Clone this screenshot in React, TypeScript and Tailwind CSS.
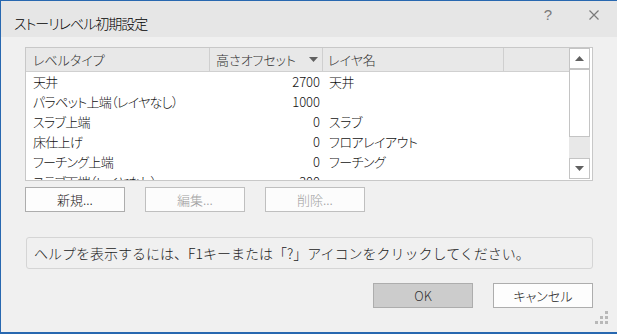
import { useState } from "react";

type Row = {
    type: string;
    offset: string;
    layer: string;
};

const rows: Row[] = [
    { type: "天井", offset: "2700", layer: "天井" },
    { type: "パラペット上端（レイヤなし）", offset: "1000", layer: "" },
    { type: "スラブ上端", offset: "0", layer: "スラブ" },
    { type: "床仕上げ", offset: "0", layer: "フロアレイアウト" },
    { type: "フーチング上端", offset: "0", layer: "フーチング" },
    { type: "スラブ下端（レイヤなし）", offset: "-300", layer: "" },
];

const font = "font-['Meiryo_UI','Noto_Sans_CJK_JP','Noto_Sans',sans-serif] font-light";
const palt = "[font-feature-settings:'palt']";

const Arrow = ({ down }: { down?: boolean }) => (
    <svg width="9" height="5" viewBox="0 0 9 5" className="block">
        <path d={down ? "M0 0h9L4.5 5z" : "M0 5h9L4.5 0z"} fill="#606060" />
    </svg>
);

const Btn = ({ label, disabled, pressed }: { label: string; disabled?: boolean; pressed?: boolean }) => (
    <button
        className={
            "w-[100px] h-[25px] border text-[13px] leading-none flex items-center justify-center " +
            palt +
            " " +
            (pressed
                ? "bg-[#cccccc] border-[#adadad] text-[#333]"
                : disabled
                  ? "bg-[#fcfcfc] border-[#bfbfbf] text-[#a0a0a0]"
                  : "bg-[#fdfdfd] border-[#adadad] text-[#222]")
        }
    >
        {label}
    </button>
);

export default function App() {
    const [sel] = useState(-1);

    return (
        <div className={"relative w-[617px] h-[334px] bg-[#f0f0f0] border-l border-t border-b-2 border-[#2868b0] flex flex-col overflow-hidden " + font}>
            {/* title bar */}
            <div className="h-[36px] bg-[#e6e6e6] flex items-start shrink-0">
                <span className={"ml-[13px] mt-[12px] text-[14px] leading-[20px] text-black tracking-[-1px] whitespace-nowrap " + palt}>
                    ストーリレベル初期設定
                </span>
                <span className="ml-auto mt-[4px] w-[10px] text-center text-[15px] leading-[20px] text-[#7a7a7a] font-['Liberation_Sans',sans-serif]">?</span>
                <span className="ml-[36px] mr-[18px] mt-[9px]">
                    <svg width="10" height="10" viewBox="0 0 10 10" className="block">
                        <path d="M0.5 0.5l9 9M9.5 0.5l-9 9" stroke="#7a7a7a" strokeWidth="1.2" />
                    </svg>
                </span>
            </div>

            <div className="flex flex-col pl-[24px] pr-[24px]">
                {/* list */}
                <div className="mt-[10px] w-[568px] h-[134px] border border-[#c8c8c8] bg-white flex overflow-hidden">
                    <div className={"w-[543px] flex flex-col text-[13px] " + palt}>
                        <div className="h-[24px] shrink-0 bg-[#e8e8e8] border-b border-[#d0d0d0] flex text-[#333]">
                            <div className="w-[184px] border-r border-[#cfcfcf] pl-[7px] flex items-center">レベルタイプ</div>
                            <div className="w-[113px] border-r border-[#cfcfcf] pl-[6px] pr-[4px] flex items-center justify-between">
                                <span>高さオフセット</span>
                                <Arrow down />
                            </div>
                            <div className="w-[181px] border-r border-[#cfcfcf] pl-[5px] flex items-center">レイヤ名</div>
                            <div className="flex-1" />
                        </div>
                        {rows.map((r, i) => (
                            <div
                                key={r.type}
                                className={"h-[20px] shrink-0 flex items-center text-[#111] " + (i === sel ? "bg-[#cce8ff]" : "")}
                            >
                                <div className="w-[184px] pl-[7px] whitespace-nowrap tracking-[-0.7px]">{r.type}</div>
                                <div className="w-[114px] pr-[4px] text-right">{r.offset}</div>
                                <div className="pl-[5px] whitespace-nowrap tracking-[-0.5px]">{r.layer}</div>
                            </div>
                        ))}
                    </div>
                    {/* scrollbar */}
                    <div className="w-[21px] flex flex-col">
                        <div className="h-[21px] border border-[#c4c4c4] bg-white flex items-center justify-center">
                            <Arrow />
                        </div>
                        <div className="h-[68px] border border-[#c4c4c4] bg-white" />
                        <div className="h-[21px] bg-[#e8e8e8]" />
                        <div className="h-[21px] border border-[#c4c4c4] bg-white flex items-center justify-center">
                            <Arrow down />
                        </div>
                    </div>
                </div>

                {/* list buttons */}
                <div className="mt-[6px] flex gap-[20px]">
                    <Btn label="新規..." />
                    <Btn label="編集..." disabled />
                    <Btn label="削除..." disabled />
                </div>

                {/* help */}
                <div className="mt-[25px] ml-px w-[567px] h-[32px] border border-[#d5d5d5] rounded-[3px] flex items-center pl-[7px] text-[14px] text-[#222] whitespace-nowrap">
                    ヘルプを表示するには、F1キーまたは「?」アイコンをクリックしてください。
                </div>

                {/* dialog buttons */}
                <div className="mt-[14px] flex justify-end gap-[20px]">
                    <Btn label="OK" pressed />
                    <Btn label="キャンセル" />
                </div>
            </div>

            {/* resize grip */}
            <div className="absolute right-[9px] bottom-[8px] grid grid-cols-3 gap-[2px]">
                <span className="w-[3px] h-[3px]" />
                <span className="w-[3px] h-[3px]" />
                <span className="w-[3px] h-[3px] bg-[#b8b8b8]" />
                <span className="w-[3px] h-[3px]" />
                <span className="w-[3px] h-[3px] bg-[#b8b8b8]" />
                <span className="w-[3px] h-[3px] bg-[#b8b8b8]" />
                <span className="w-[3px] h-[3px] bg-[#b8b8b8]" />
                <span className="w-[3px] h-[3px] bg-[#b8b8b8]" />
                <span className="w-[3px] h-[3px] bg-[#b8b8b8]" />
            </div>
        </div>
    );
}
